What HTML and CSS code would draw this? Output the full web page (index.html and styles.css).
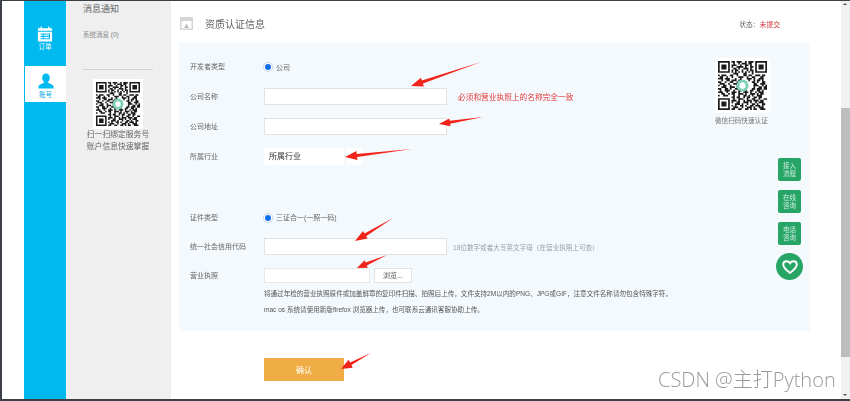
FILE: index.html
```html
<!DOCTYPE html>
<html lang="zh-CN">
<head>
<meta charset="utf-8">
<title>资质认证信息</title>
<link rel="stylesheet" href="styles.css">
</head>
<body>
<svg class="defs" width="0" height="0" aria-hidden="true">
  <symbol id="qr" viewBox="0 0 29 29">
    <path fill="none" stroke="#1a1a1a" stroke-width="1" d="M.5.5h6v6h-6zM22.5.5h6v6h-6zM.5 22.5h6v6h-6z"/>
    <path fill="#1a1a1a" d="M2 2h3v3H2zM24 2h3v3h-3zM2 24h3v3H2z"/>
    <path fill="none" stroke="#1a1a1a" stroke-width="1" d="M8 .5h2m1 0h3m2 0h1m1 0h3M9 1.5h1m2 0h1m1 0h3m1 0h2m0 0M8 2.5h3m2 0h1m2 0h2m1 0h1M8 3.5h1m2 0h4m1 0h1m2 0h2M9 4.5h2m1 0h1m2 0h3m1 0h1M8 5.5h1m1 0h2m2 0h1m2 0h1m1 0h2M8 6.5h1m1 0h1m1 0h1m1 0h1m1 0h1m1 0h1m1 0h1M9 7.5h3m3 0h2m3 0h1M0 8.5h1m1 0h3m2 0h2m2 0h1m3 0h2m1 0h2m2 0h3m1 0h2M1 9.5h2m2 0h1m2 0h1m3 0h3m2 0h1m2 0h2m3 0h2M0 10.5h3m1 0h3m3 0h1m2 0h1m3 0h3m1 0h1m2 0h3M2 11.5h1m2 0h2m1 0h3m1 0h2m4 0h1m2 0h1m1 0h2m1 0h1M0 12.5h2m2 0h1m2 0h2m2 0h1m8 0h2m1 0h1m2 0h2M1 13.5h3m2 0h1m2 0h3m9 0h2m2 0h3M0 14.5h1m2 0h2m2 0h1m3 0h1m9 0h3m2 0h1m1 0h1M2 15.5h3m2 0h3m1 0h1m9 0h1m2 0h2m1 0h2M0 16.5h2m2 0h2m1 0h1m2 0h2m8 0h2m1 0h3m1 0h2M1 17.5h1m2 0h3m2 0h1m2 0h2m2 0h1m2 0h2m2 0h2m1 0h1M0 18.5h3m2 0h1m2 0h3m1 0h1m2 0h3m1 0h1m2 0h1m1 0h3M2 19.5h2m2 0h1m1 0h2m2 0h3m1 0h1m2 0h3m1 0h1m1 0h2M0 20.5h1m2 0h3m3 0h1m2 0h1m2 0h2m1 0h1m1 0h1m2 0h3M8 21.5h2m1 0h2m2 0h1m1 0h2m2 0h2m1 0h2M9 22.5h1m2 0h3m2 0h1m2 0h2m2 0h1m2 0h2M8 23.5h3m1 0h1m2 0h1m1 0h3m1 0h3m1 0h2M8 24.5h1m2 0h2m2 0h3m1 0h1m2 0h1m1 0h3M10 25.5h3m1 0h1m2 0h1m2 0h2m1 0h1m2 0h2M8 26.5h1m1 0h1m2 0h2m1 0h1m2 0h2m1 0h3m1 0h1M9 27.5h3m2 0h1m2 0h3m1 0h1m2 0h3M8 28.5h2m2 0h2m2 0h2m1 0h1m1 0h2m2 0h3"/>
    <circle cx="14.5" cy="14.5" r="3.600" fill="#7fd0b8"/>
    <path fill="#fff" d="M14.500 12.500l1.700 1v2.200l-1.700 1-1.700-1v-2.200z"/>
  </symbol>
</svg>

<div class="screen">
  <nav class="rail">
    <div class="rail-item">
      <svg class="rail-icon" viewBox="0 0 18 18" aria-hidden="true">
        <path fill="#fff" d="M1 3h3V1h1.500v2h7V1H14v2h3v15H1z"/>
        <path fill="none" stroke="#00b9ef" stroke-width="1.200" d="M1 6.500h16M4 9.500h10v5.500H4M7 9.500v5.500M4 12.200h10"/>
      </svg>
      <span>订单</span>
    </div>
    <div class="rail-item is-active">
      <svg class="rail-icon" viewBox="0 0 18 18" aria-hidden="true">
        <path fill="#00b9ef" d="M9 0c2.700 0 4.300 2 4.300 4.700 0 2-1 3.900-2.100 5 .2 1.100 1.400 1.600 3 2.200 2.200.8 3.300 1.700 3.300 3.600V17H.5v-1.500c0-1.900 1.100-2.800 3.300-3.600 1.600-.6 2.800-1.100 3-2.200-1.100-1.100-2.100-3-2.100-5C4.700 2 6.300 0 9 0z"/>
      </svg>
      <span>账号</span>
    </div>
  </nav>

  <aside class="side">
    <h2 class="side-title">消息通知</h2>
    <p class="side-msg">系统消息 (0)</p>
    <hr class="side-rule">
    <svg class="side-qr" aria-hidden="true"><use href="#qr"/></svg>
    <p class="side-note">扫一扫绑定服务号<br>账户信息快速掌握</p>
  </aside>

  <main class="main">
    <header class="head">
      <svg class="head-icon" viewBox="0 0 13 13" aria-hidden="true">
        <path fill="#d4d4d4" d="M0 0h13v13H0z"/>
        <path fill="#fff" d="M1.500 4h10v7.500h-10z"/>
        <path fill="#bdbdbd" d="M4 11l2.500-4.500L9 11z"/>
      </svg>
      <h1 class="head-title">资质认证信息</h1>
      <p class="status">状态：<span class="status-val">未提交</span></p>
    </header>

    <section class="panel">
      <form class="form">
        <div class="row row-first">
          <label class="lab">开发者类型</label>
          <span class="radio"></span><span class="opt">公司</span>
        </div>
        <div class="row">
          <label class="lab">公司名称</label>
          <span class="input"></span><span class="warn">必须和营业执照上的名称完全一致</span>
        </div>
        <div class="row">
          <label class="lab">公司地址</label>
          <span class="input"></span>
        </div>
        <div class="row">
          <label class="lab">所属行业</label>
          <span class="select"><span class="select-val">所属行业</span><span class="select-end"></span></span>
        </div>
        <div class="row row-gap">
          <label class="lab">证件类型</label>
          <span class="radio"></span><span class="opt">三证合一(一照一码)</span>
        </div>
        <div class="row">
          <label class="lab">统一社会信用代码</label>
          <span class="input"></span><span class="hint">18位数字或者大写英文字母（在营业执照上可查）</span>
        </div>
        <div class="row row-file">
          <label class="lab">营业执照</label>
          <span class="file"></span><span class="browse">浏览...</span>
        </div>
        <p class="help">将通过年检的营业执照原件或加盖鲜章的复印件扫描、拍照后上传，文件支持2M以内的PNG、JPG或GIF，注意文件名称请勿包含特殊字符。</p>
        <p class="help">mac os 系统请使用新版firefox 浏览器上传，也可联系云通讯客服协助上传。</p>
      </form>
      <div class="panel-qr">
        <svg class="big-qr" aria-hidden="true"><use href="#qr"/></svg>
        <p class="qr-cap">微信扫码快速认证</p>
      </div>
    </section>

    <button class="confirm" type="button">确认</button>
  </main>

  <div class="scrollbar">
    <span class="arrow up"></span>
    <span class="thumb"></span>
    <span class="arrow down"></span>
  </div>
</div>

<div class="floaters">
  <span class="fbtn">接入<br>流程</span>
  <span class="fbtn">在线<br>咨询</span>
  <span class="fbtn">电话<br>咨询</span>
  <span class="fheart">
    <svg viewBox="0 0 16 16" width="16" height="16" aria-hidden="true">
      <path fill="none" stroke="#fff" stroke-width="1.900" d="M8 14C4 11 1.200 8.500 1.200 5.600 1.200 3.500 2.800 2.200 4.600 2.200 6 2.200 7.300 3 8 4.200 8.700 3 10 2.200 11.400 2.200c1.800 0 3.400 1.300 3.400 3.400C14.800 8.500 12 11 8 14z"/>
    </svg>
  </span>
</div>

<svg class="arrows" viewBox="0 0 850 401" aria-hidden="true">
  <g fill="#f2241a">
    <path d="M481 62L421.900 80.600L420.900 77.800L411 86L423.900 86.400L422.900 83.600Z"/>
    <path d="M483 117L449.700 120.800L449.300 118.400L439 124L450.500 126.200L450.100 123.800Z"/>
    <path d="M412 149L356.700 154.100L356.400 151.100L345 157L357.400 160L357.100 157.100Z"/>
    <path d="M393 218L364.500 233.400L363 231L355 241L367.600 238.600L366.100 236.200Z"/>
    <path d="M387 255L365.600 262.600L364.600 260.300L357 268L367.800 267.700L366.800 265.400Z"/>
    <path d="M371 353L350 362.500L348.600 359.800L341 369L352.800 367.800L351.400 365.100Z"/>
  </g>
</svg>

<div class="watermark">CSDN @主打Python</div>
</body>
</html>
```

FILE: styles.css
```css
* { box-sizing: border-box; }
html, body { margin: 0; height: 100%; overflow: hidden; background: #fff; }
body {
  font-family: "Liberation Sans", "Noto Sans CJK SC", sans-serif;
  color: #555;
  position: relative;
}
p, h1, h2 { margin: 0; font-weight: 400; }
.defs { position: absolute; }

.screen {
  display: flex;
  width: 850px;
  height: 401px;
  border-top: 1px solid #3a4046;
  border-bottom: 2px solid #3a4046;
  border-left: 2px solid #3a4046;
  padding-left: 22px;
  filter: blur(0.45px);
}

.rail { width: 42px; flex: none; background: #00b9ef; color: #fff; padding-top: 24px; }
.rail-item {
  height: 41px;
  display: flex;
  flex-direction: column;
  align-items: center;
  font-size: 6.500px;
  line-height: 8px;
}
.rail-icon { width: 16px; height: 17px; margin-bottom: 1px; flex: none; }
.is-active {
  height: 36px;
  background: #fff;
  color: #00a8de;
  padding-top: 7px;
  margin-left: 1px;
}

.side { width: 105px; flex: none; background: #efefef; padding: 1px 0 0 17px; }
.side-title { font-size: 9px; line-height: 14px; color: #666; }
.side-msg { font-size: 6.500px; line-height: 10px; margin-top: 14px; color: #888; }
.side-rule { width: 70px; margin: 29px 0 0; border: 0; border-top: 1px solid #d3d3d3; }
.side-qr { display: block; width: 50px; height: 50px; margin: 9px 0 0 10px; padding: 3px; background: #fff; }
.side-note { width: 70px; font-size: 7.800px; line-height: 12px; text-align: center; color: #666; }

.main { flex: 1; min-width: 0; padding: 0 31px 0 8px; }
.head { display: flex; align-items: center; height: 41px; padding: 10px 30px 6px 1px; }
.head-icon { width: 13px; height: 13px; flex: none; }
.head-title { font-size: 10px; color: #666; margin: 0 0 1px 12px; }
.status { margin-left: auto; font-size: 6.800px; color: #666; }
.status-val { color: #d0343c; }

.panel {
  display: flex;
  justify-content: space-between;
  width: 631px;
  height: 289px;
  background: #f4f9fd;
  padding: 17px 39px 0 11px;
}
.form { width: 490px; }
.row { display: flex; align-items: center; height: 17px; margin-bottom: 13px; font-size: 7px; color: #666; white-space: nowrap; }
.row-first { height: 16px; }
.row-gap { margin-top: 44px; margin-bottom: 12px; }
.row-file { height: 15px; margin-bottom: 3px; }
.lab { width: 74px; flex: none; font-size: 7px; color: #666; margin-bottom: 2px; }
.radio {
  width: 6px; height: 6px;
  margin-left: 1px;
  border-radius: 50%;
  background: #0a6fe8;
  box-shadow: 0 0 0 1px #fff, 0 0 0 2px #c8d8e8;
  flex: none;
}
.opt { margin-left: 5px; margin-bottom: 1px; }
.input { width: 183px; height: 17px; flex: none; background: #fff; border: 1px solid #e2e2e2; }
.warn { margin-left: 11px; font-size: 7.700px; color: #e23b3b; }
.hint { margin-left: 6px; font-size: 6.600px; color: #9aa0a6; }
.select { display: flex; width: 98px; height: 17px; background: #fff; }
.select-val { width: 81px; padding-left: 5px; font-size: 8px; line-height: 17px; color: #333; }
.select-end { flex: 1; border-left: 1px solid #eee; }
.file { width: 106px; height: 15px; background: #fff; border: 1px solid #e8e8e8; flex: none; }
.browse {
  width: 38px; height: 15px;
  margin-left: 4px;
  background: #fff;
  border: 1px solid #e2e2e2;
  text-align: center;
  line-height: 13px;
  font-size: 7px;
  color: #555;
}
.help { font-size: 6.570px; line-height: 16px; color: #555; white-space: nowrap; margin-left: 74px; }

.panel-qr { width: 56px; flex: none; margin-top: -1px; }
.big-qr { display: block; width: 55px; height: 55px; padding: 3px; background: #fff; }
.qr-cap { margin-top: 4px; font-size: 6.600px; line-height: 8px; white-space: nowrap; color: #777; }

.confirm {
  display: block;
  width: 80px;
  height: 23px;
  margin: 27px 0 0 85px;
  border: 0;
  background: #f0ad45;
  color: #fff;
  font: 8px "Liberation Sans", "Noto Sans CJK SC", sans-serif;
  padding: 0;
}

.scrollbar { width: 9px; flex: none; display: flex; flex-direction: column; background: #f1f1f1; }
.arrow { height: 8px; position: relative; flex: none; }
.arrow::after {
  content: "";
  position: absolute;
  left: 2px;
  border: 2.500px solid transparent;
}
.up::after { border-bottom-color: #555; top: 0; }
.down::after { border-top-color: #555; top: 3px; }
.thumb { height: 249px; margin-top: 99px; background: #bdbdbd; flex: none; }
.down { margin-top: auto; }

.floaters {
  position: absolute;
  left: 776px;
  top: 158px;
  width: 27px;
  display: flex;
  flex-direction: column;
  align-items: center;
  gap: 9px;
  filter: blur(0.3px);
}
.fbtn {
  width: 23px;
  height: 23px;
  background: #27a567;
  border-radius: 2px;
  color: #cfeede;
  font-size: 6.500px;
  line-height: 8px;
  text-align: center;
  padding-top: 4px;
}
.fheart {
  width: 27px;
  height: 27px;
  margin-top: -1px;
  border-radius: 50%;
  background: #27a567;
  display: flex;
  align-items: center;
  justify-content: center;
}

.arrows { position: absolute; left: 0; top: 0; width: 850px; height: 401px; pointer-events: none; }

.watermark {
  position: absolute;
  left: 658px;
  top: 368px;
  font-family: "Open Sans", "Noto Sans CJK SC", sans-serif;
  font-weight: 300;
  font-size: 20px;
  line-height: 24px;
  color: #9a9a9a;
  white-space: nowrap;
}
```
